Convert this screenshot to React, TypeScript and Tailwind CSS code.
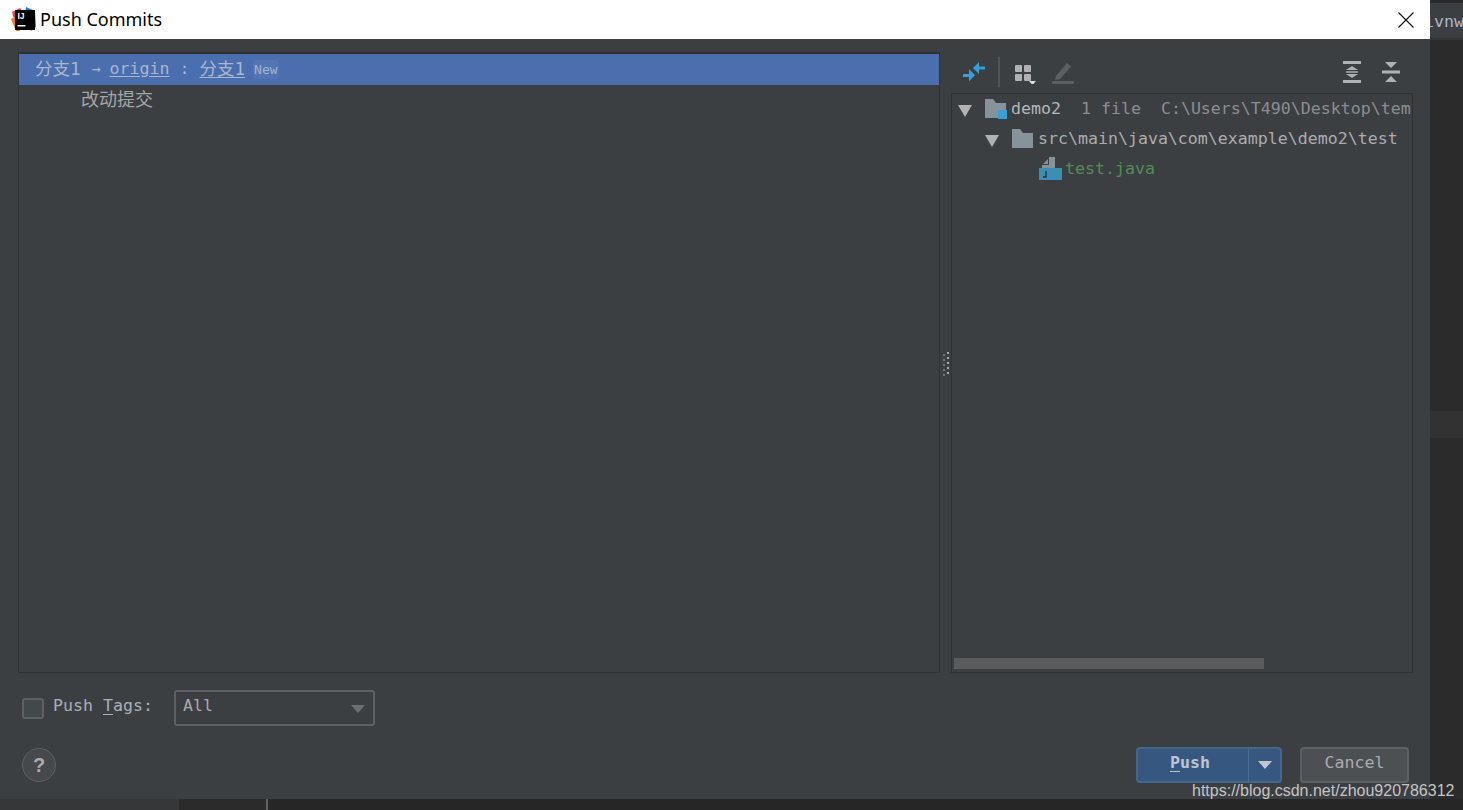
const mono = "font-['DejaVu_Sans_Mono','Liberation_Mono','Noto_Sans_CJK_SC',monospace]";

const Triangle = ({ className = "" }: { className?: string }) => (
  <svg width="16" height="13" viewBox="0 0 16 13" className={`shrink-0 ${className}`}>
    <path d="M1 1h14L8 13z" fill="#afb1b3" />
  </svg>
);

const Folder = ({ badge = false }: { badge?: boolean }) => (
  <svg width="24" height="22" viewBox="0 0 24 22" className="shrink-0">
    <path d="M1 1h8l3 4h10v15H1z" fill="#87939a" />
    {badge && <rect x="14" y="12" width="9" height="9" fill="#389fd6" />}
  </svg>
);

const JavaFile = () => (
  <svg width="24" height="24" viewBox="0 0 24 24" className="shrink-0">
    <path d="M4 7 9 2v5z" fill="#87939a" />
    <path d="M10 0h6v13H3V8h7z" fill="#87939a" />
    <rect x="0" y="11" width="23" height="12" fill="#3d8eb3" />
    <path d="M7 14v6H4" fill="none" stroke="#25323a" strokeWidth="1.4" />
  </svg>
);

export default function App() {
  return (
    <div className={`relative flex h-[810px] w-[1463px] flex-col overflow-hidden bg-[#2b2b2b] ${mono}`}>
      <div className="flex h-[799px]">
        {/* dialog */}
        <div className="flex w-[1430px] flex-col bg-[#3c3f41]">
          <div className="flex h-[39px] shrink-0 items-center bg-white pl-[11px] pr-[16px]">
            <svg width="25" height="25" viewBox="0 0 25 25" className="-mt-[1px] shrink-0">
              <path d="M1 5 9 1l3 4-7 6-2 1z" fill="#fe315d" />
              <path d="M0 12l6-3 3 15-4 0z" fill="#f97a12" />
              <path d="M15 0l9 4 1 16-5 4-6-14z" fill="#087cfa" />
              <rect x="4" y="3" width="20" height="20" fill="#000" />
              <text x="6.500" y="12" fill="#fff" fontSize="8.500" fontWeight="700" fontFamily="'Liberation Sans',sans-serif">IJ</text>
              <rect x="6.500" y="18" width="8" height="1.500" fill="#fff" />
            </svg>
            <span className="ml-[4px] font-['Noto_Sans',sans-serif] text-[18px] text-black">Push Commits</span>
            <svg width="18" height="18" viewBox="0 0 18 18" className="ml-auto mr-[-1px]">
              <path d="M1.500 1.500l15 15M16.500 1.500l-15 15" stroke="#111" strokeWidth="1.100" fill="none" />
            </svg>
          </div>

          <div className="box-content flex h-[621px] pl-[18px] pr-[17px] pt-[13px]">
            {/* commits panel */}
            <div className="w-[922px] border border-[#2f3133] border-t-2">
              <div className="flex h-[31px] items-center whitespace-pre bg-[#4b6eaf] pl-[16px] text-[16.6px] text-[#aab6cb]">
                <span className="text-[17.5px]">分支1</span>
                <span className="ml-[11px] text-[15px]">→</span>
                <span className="ml-[9px] underline underline-offset-2">origin</span>
                <span> : </span>
                <span className="text-[17.5px] underline underline-offset-2">分支1</span>
                <span className="ml-[8px] rounded-[3px] bg-[#5375b3] px-[1px] text-[13px] text-[#a3b2cc]">New</span>
              </div>
              <div className="flex h-[29px] items-center pl-[62px] text-[18px] text-[#a3a6a8]">改动提交</div>
            </div>

            {/* splitter */}
            <div className="flex w-[11px] shrink-0 flex-col items-center justify-center gap-[1px] pt-[3px]">
              {[0, 1, 2, 3, 4].map((i) => (
                <div key={i} className="flex gap-[2px]">
                  <div className="mt-[2px] h-[2px] w-[2px] bg-[#6f7274]" />
                  <div className="h-[2px] w-[2px] bg-[#a6a8aa]" />
                </div>
              ))}
            </div>

            {/* changes panel */}
            <div className="flex w-[462px] flex-col">
              <div className="flex h-[41px] shrink-0 items-center pb-[2px] pl-[11px] pr-[12px]">
                <svg width="24" height="24" viewBox="0 0 24 24">
                  <path d="M1 14h6V9l6 6-6 6.500V17H1z" fill="#389fd6" />
                  <path d="M23 6.500h-6V2l-6 6 6 6V9.500h6z" fill="#389fd6" />
                </svg>
                <div className="ml-[12px] h-[30px] w-[2px] bg-[#515355]" />
                <svg width="22" height="24" viewBox="0 0 22 24" className="ml-[14px]">
                  <rect x="1" y="5" width="7" height="7" rx="1" fill="#afb1b3" />
                  <rect x="10" y="5" width="7" height="7" rx="1" fill="#afb1b3" />
                  <rect x="1" y="14" width="7" height="7" rx="1" fill="#afb1b3" />
                  <rect x="10" y="14" width="7" height="7" rx="1" fill="#afb1b3" />
                  <path d="M15 21h7l-3.500 4z" fill="#e0e0e0" />
                </svg>
                <svg width="24" height="24" viewBox="0 0 24 24" className="ml-[15px]">
                  <path d="M5 16 16 3l4 3.500L9 19l-5 1z" fill="#5d6062" />
                  <rect x="1" y="21" width="22" height="3" rx="1" fill="#5d6062" />
                </svg>
                <svg width="20" height="24" viewBox="0 0 20 24" className="ml-auto">
                  <rect x="1" y="1" width="18" height="3" fill="#afb1b3" />
                  <rect x="1" y="20" width="18" height="3" fill="#afb1b3" />
                  <path d="M10 6l6 4H4zM10 18l6-4H4z" fill="#afb1b3" />
                  <rect x="4" y="11.300" width="12" height="1.400" fill="#afb1b3" />
                </svg>
                <svg width="20" height="24" viewBox="0 0 20 24" className="ml-[19px]">
                  <rect x="1" y="10.500" width="18" height="3" fill="#afb1b3" />
                  <path d="M4 2h12l-6 6zM4 22h12l-6-6z" fill="#afb1b3" />
                </svg>
              </div>

              <div className="flex min-h-0 flex-1 flex-col overflow-hidden border border-[#2f3133] text-[16.6px] leading-[30px]">
                <div className="h-[564px] overflow-hidden">
                  <div className="flex h-[30px] items-center whitespace-pre pl-[5px]">
                    <Triangle className="mt-[3px]" />
                    <span className="ml-[11px] shrink-0"><Folder badge /></span>
                    <span className="ml-[3px] shrink-0 text-[#b4b8ba]">demo2</span>
                    <span className="ml-[20px] shrink-0 text-[#8b8e90]">1 file</span>
                    <span className="ml-[20px] shrink-0 text-[#8b8e90]">C:\Users\T490\Desktop\tem</span>
                  </div>
                  <div className="flex h-[30px] items-center whitespace-pre pl-[32px]">
                    <Triangle className="mt-[3px]" />
                    <span className="ml-[11px]"><Folder /></span>
                    <span className="ml-[3px] text-[#a9adaf]">src\main\java\com\example\demo2\test</span>
                  </div>
                  <div className="flex h-[30px] items-center whitespace-pre pl-[87px]">
                    <JavaFile />
                    <span className="ml-[2px] text-[#558a55]">test.java</span>
                  </div>
                </div>
                <div className="pl-[2px]">
                  <div className="h-[11px] w-[310px] bg-[#595b5d]" />
                </div>
              </div>
            </div>
          </div>

          {/* push tags row */}
          <div className="flex h-[70px] shrink-0 items-center pl-[22px] text-[16.6px]">
            <div className="mt-[1px] h-[21px] w-[22px] rounded-[3px] border-2 border-[#5e6163] bg-[#43494a]" />
            <span className="-mt-[3px] ml-[9px] whitespace-pre text-[#a7b0b6]">
              Push <span className="underline underline-offset-3">T</span>ags:
            </span>
            <div className="ml-[21px] flex h-[36px] w-[201px] items-center rounded-[3px] border-2 border-[#5e6163] pl-[7px] pr-[8px] text-[#a7a9ab]">
              <span className="-mt-[3px]">All</span>
              <svg width="14" height="9" viewBox="0 0 14 9" className="ml-auto mt-[2px]">
                <path d="M0 0h14L7 8z" fill="#6c6f71" />
              </svg>
            </div>
          </div>

          {/* footer */}
          <div className="flex flex-1 items-start pl-[22px] pr-[21px]">
            <div className="mt-[5px] flex h-[34px] w-[34px] items-center justify-center rounded-full border border-[#5e6163] bg-[#46494b] font-['Liberation_Sans',sans-serif] text-[20px] font-bold text-[#a9abad]">
              ?
            </div>
            <div className="ml-auto mt-[4px] flex h-[36px] w-[146px] items-center rounded-[4px] border-2 border-[#43688c] bg-[#365880] text-[16.6px] font-bold text-[#bbc5d0]">
              <span className="flex w-[110px] justify-center whitespace-pre pb-[4px] pr-[6px]">
                <span className="underline underline-offset-3">P</span>ush
              </span>
              <div className="h-full w-px bg-[#4a6f96]" />
              <span className="flex flex-1 justify-center">
                <svg width="14" height="8" viewBox="0 0 14 8"><path d="M0 0h14L7 8z" fill="#bfc6ce" /></svg>
              </span>
            </div>
            <div className="ml-[18px] mt-[4px] flex h-[36px] w-[109px] items-center justify-center rounded-[4px] border-2 border-[#5e6163] bg-[#4c5052] pb-[4px] text-[16.6px] text-[#a9adaf]">
              Cancel
            </div>
          </div>
        </div>

        {/* ide behind the dialog */}
        <div className="flex flex-1 flex-col overflow-hidden bg-[#2b2b2b]">
          <div className="h-[40px] whitespace-pre border-b-2 border-t-[3px] border-b-[#323436] border-t-[#2b2b2b] bg-[#3c3f41] pt-[8px] text-[16.6px] leading-[22px] text-[#a9b7c6]">
            <span className="-ml-[6px] block">ivnw</span>
          </div>
          <div className="mt-[371px] h-[27px] bg-[#323232]" />
        </div>
      </div>

      {/* bottom of the ide */}
      <div className="flex h-[11px]">
        <div className="w-[179px] bg-[#353739]" />
        <div className="w-[87px] bg-[#2b2b2b]" />
        <div className="w-[2px] bg-[#606060]" />
        <div className="flex-1 bg-[#262626]" />
      </div>

      {/* csdn watermark */}
      <span className="absolute left-[1192px] top-[781px] font-['Liberation_Sans',sans-serif] text-[16px] leading-[20px] text-[#c4c4c4]">
        https://blog.csdn.net/zhou920786312
      </span>
    </div>
  );
}
